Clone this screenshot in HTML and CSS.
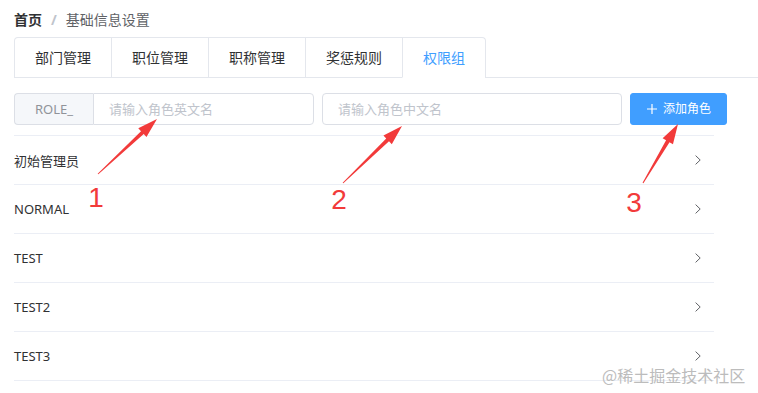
FILE: index.html
```html
<!DOCTYPE html>
<html lang="zh-CN">
<head>
<meta charset="utf-8">
<title>基础信息设置</title>
<link rel="stylesheet" href="styles.css">
</head>
<body>
<div class="page">
  <nav class="breadcrumb">
    <span class="crumb crumb-home">首页</span>
    <span class="crumb-sep">/</span>
    <span class="crumb">基础信息设置</span>
  </nav>

  <div class="tabs-header">
    <div class="tabs-nav">
      <div class="tab">部门管理</div>
      <div class="tab">职位管理</div>
      <div class="tab">职称管理</div>
      <div class="tab">奖惩规则</div>
      <div class="tab tab-active">权限组</div>
    </div>
  </div>

  <div class="toolbar">
    <div class="input-group">
      <div class="prepend">ROLE_</div>
      <input class="input input-append" type="text" placeholder="请输入角色英文名">
    </div>
    <input class="input input-single" type="text" placeholder="请输入角色中文名">
    <button class="btn-primary" type="button">
      <svg class="btn-icon" width="12" height="12" viewBox="0 0 12 12"><path d="M6 1v10M1 6h10" stroke="#fff" stroke-width="1.2" fill="none"/></svg>
      <span>添加角色</span>
    </button>
  </div>

  <div class="collapse">
    <div class="collapse-item"><span class="item-title">初始管理员</span><svg class="chev" width="6" height="10" viewBox="0 0 6 10"><polyline points="0.6,0.6 5.2,5 0.6,9.4" fill="none" stroke="#606266" stroke-width="1"/></svg></div>
    <div class="collapse-item"><span class="item-title">NORMAL</span><svg class="chev" width="6" height="10" viewBox="0 0 6 10"><polyline points="0.6,0.6 5.2,5 0.6,9.4" fill="none" stroke="#606266" stroke-width="1"/></svg></div>
    <div class="collapse-item"><span class="item-title">TEST</span><svg class="chev" width="6" height="10" viewBox="0 0 6 10"><polyline points="0.6,0.6 5.2,5 0.6,9.4" fill="none" stroke="#606266" stroke-width="1"/></svg></div>
    <div class="collapse-item"><span class="item-title">TEST2</span><svg class="chev" width="6" height="10" viewBox="0 0 6 10"><polyline points="0.6,0.6 5.2,5 0.6,9.4" fill="none" stroke="#606266" stroke-width="1"/></svg></div>
    <div class="collapse-item"><span class="item-title">TEST3</span><svg class="chev" width="6" height="10" viewBox="0 0 6 10"><polyline points="0.6,0.6 5.2,5 0.6,9.4" fill="none" stroke="#606266" stroke-width="1"/></svg></div>
  </div>
</div>

<svg class="annotations" width="758" height="393" viewBox="0 0 758 393">
  <g fill="#f23a3a">
    <polygon points="98.34,174.37 143.73,134.10 146.46,137.03 157,119 138.28,128.25 141.01,131.18 97.66,173.63"/>
    <polygon points="343.35,183.36 389.01,141.34 391.79,144.22 402,126 383.45,135.58 386.23,138.46 342.65,182.64"/>
    <polygon points="643.43,183.26 669.52,142.22 672.96,144.26 678,124 662.64,138.14 666.08,140.18 642.57,182.74"/>
  </g>
  <g class="anno-num" fill="#f23a3a">
    <text x="96" y="207" text-anchor="middle">1</text>
    <text x="339" y="209" text-anchor="middle">2</text>
    <text x="634" y="212" text-anchor="middle">3</text>
  </g>
</svg>

<div class="watermark">@稀土掘金技术社区</div>
</body>
</html>
```

FILE: styles.css
```css
* {
  box-sizing: border-box;
}

html, body {
  margin: 0;
  padding: 0;
  background: #fff;
}

body {
  position: relative;
  width: 758px;
  height: 393px;
  overflow: hidden;
  font-family: "Noto Sans", "Noto Sans CJK SC", sans-serif;
  color: #303133;
}

.page {
  padding: 13px 0 0 14px;
}

/* breadcrumb */
.breadcrumb {
  display: flex;
  align-items: center;
  height: 14px;
  font-size: 14px;
  line-height: 14px;
}

.crumb {
  color: #606266;
}

.crumb-home {
  color: #303133;
  font-weight: 700;
}

.crumb-sep {
  margin: 0 9px;
  color: #c0c4cc;
  font-weight: 700;
}

/* tabs */
.tabs-header {
  margin-top: 10px;
  border-bottom: 1px solid #e4e7ed;
  display: flex;
}

.tabs-nav {
  display: flex;
  border: 1px solid #e4e7ed;
  border-bottom: none;
  border-radius: 4px 4px 0 0;
  margin-bottom: -1px;
}

.tab {
  height: 40px;
  line-height: 39px;
  padding: 0 20px;
  font-size: 14px;
  color: #303133;
  border-bottom: 1px solid transparent;
  border-left: 1px solid #e4e7ed;
}

.tab:first-child {
  border-left: none;
}

.tab-active {
  color: #409eff;
  border-bottom-color: #fff;
}

/* toolbar */
.toolbar {
  display: flex;
  align-items: center;
  margin-top: 15px;
  height: 32px;
}

.input-group {
  display: flex;
  width: 300px;
  height: 32px;
}

.prepend {
  height: 32px;
  line-height: 30px;
  padding: 0 20px;
  background: #f5f7fa;
  color: #909399;
  font-size: 13px;
  border: 1px solid #dcdfe6;
  border-right: none;
  border-radius: 4px 0 0 4px;
  white-space: nowrap;
}

.input {
  height: 32px;
  padding: 0 15px;
  font-family: "Noto Sans", "Noto Sans CJK SC", sans-serif;
  font-size: 13px;
  color: #606266;
  border: 1px solid #dcdfe6;
  border-radius: 4px;
  outline: none;
  background: #fff;
}

.input::placeholder {
  color: #c0c4cc;
}

.input-append {
  flex: 1;
  min-width: 0;
  border-radius: 0 4px 4px 0;
}

.input-single {
  width: 300px;
  margin-left: 8px;
}

.btn-primary {
  margin-left: 8px;
  height: 32px;
  padding: 0 15px;
  display: flex;
  align-items: center;
  gap: 5px;
  background: #409eff;
  border: 1px solid #409eff;
  border-radius: 3px;
  color: #fff;
  font-family: "Noto Sans", "Noto Sans CJK SC", sans-serif;
  font-size: 12px;
  line-height: 12px;
}

.btn-icon {
  display: block;
}

/* collapse list */
.collapse {
  width: 700px;
  margin-top: 10px;
  border-top: 1px solid #ebeef5;
}

.collapse-item {
  display: flex;
  align-items: center;
  height: 49px;
  border-bottom: 1px solid #ebeef5;
  font-size: 13px;
  color: #303133;
}

.item-title {
  flex: 1;
}

.chev {
  display: block;
  margin-right: 13px;
}

/* overlays */
.annotations {
  position: absolute;
  left: 0;
  top: 0;
  pointer-events: none;
}

.anno-num {
  font-family: "Liberation Sans", sans-serif;
  font-size: 28px;
}

.watermark {
  position: absolute;
  left: 602px;
  top: 365px;
  font-family: "Noto Sans CJK SC", sans-serif;
  font-size: 16px;
  line-height: 20px;
  color: #bcbcbc;
  white-space: nowrap;
  pointer-events: none;
}
```
